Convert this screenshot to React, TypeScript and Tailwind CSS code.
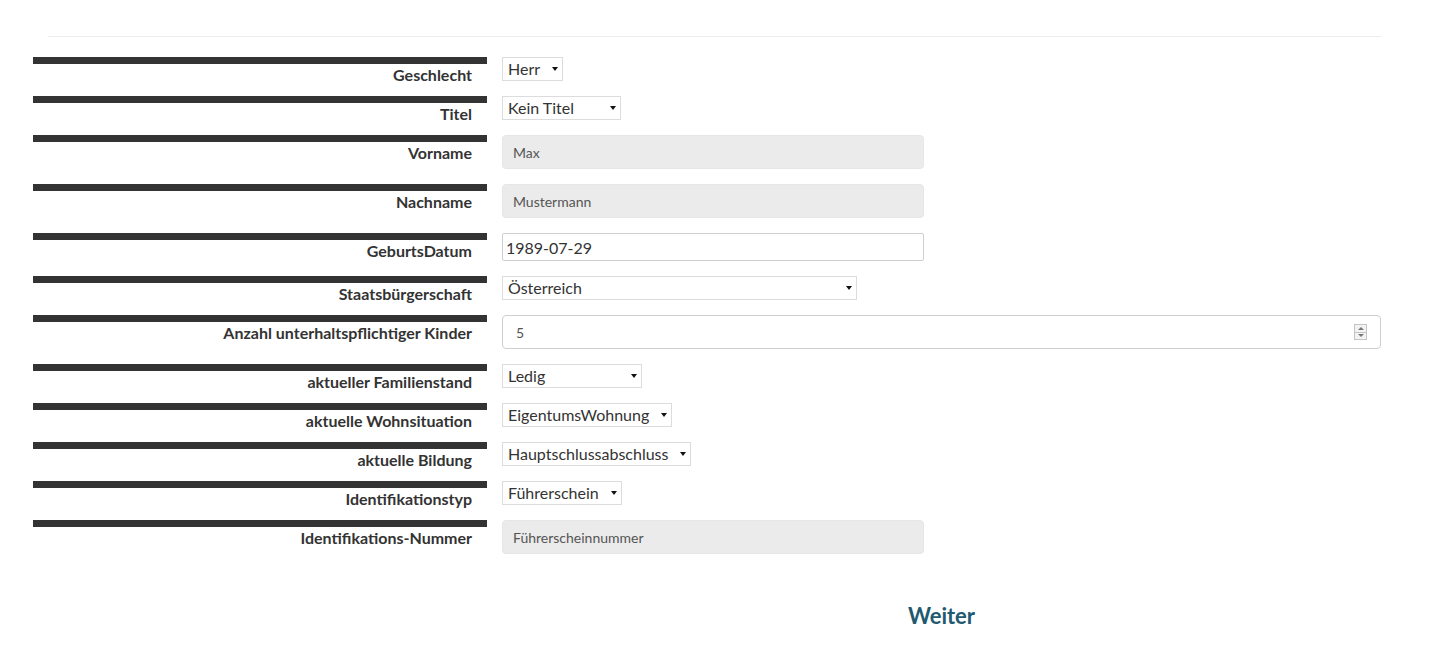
import React from 'react';

type Field =
  | { label: string; kind: 'select'; value: string; width: string }
  | { label: string; kind: 'readonly'; value: string }
  | { label: string; kind: 'date'; value: string }
  | { label: string; kind: 'number'; value: string };

const fields: Field[] = [
  { label: 'Geschlecht', kind: 'select', value: 'Herr', width: 'w-[61px]' },
  { label: 'Titel', kind: 'select', value: 'Kein Titel', width: 'w-[119px]' },
  { label: 'Vorname', kind: 'readonly', value: 'Max' },
  { label: 'Nachname', kind: 'readonly', value: 'Mustermann' },
  { label: 'GeburtsDatum', kind: 'date', value: '1989-07-29' },
  { label: 'Staatsbürgerschaft', kind: 'select', value: 'Österreich', width: 'w-[355px]' },
  { label: 'Anzahl unterhaltspflichtiger Kinder', kind: 'number', value: '5' },
  { label: 'aktueller Familienstand', kind: 'select', value: 'Ledig', width: 'w-[140px]' },
  { label: 'aktuelle Wohnsituation', kind: 'select', value: 'EigentumsWohnung', width: 'w-[170px]' },
  { label: 'aktuelle Bildung', kind: 'select', value: 'Hauptschlussabschluss', width: 'w-[189px]' },
  { label: 'Identifikationstyp', kind: 'select', value: 'Führerschein', width: 'w-[120px]' },
  { label: 'Identifikations-Nummer', kind: 'readonly', value: 'Führerscheinnummer' },
];

const Control = ({ field }: { field: Field }) => {
  if (field.kind === 'select') {
    return (
      <div className={`relative ${field.width} h-[24px]`}>
        <select
          defaultValue={field.value}
          className="w-full h-full appearance-none bg-white border border-[#dcdcdc] pl-[5px] text-[16px] leading-[22px] text-[#333] outline-none"
        >
          <option>{field.value}</option>
        </select>
        {/* arrow */}
        <span className="pointer-events-none absolute right-[5px] top-[10px] w-0 h-0 border-l-[3.5px] border-r-[3.5px] border-t-[4px] border-l-transparent border-r-transparent border-t-[#111]" />
      </div>
    );
  }
  if (field.kind === 'readonly') {
    return (
      <input
        readOnly
        value={field.value}
        className="w-[422px] h-[34px] bg-[#ebebeb] border border-[#e6e6e6] rounded-[4px] pl-[10px] text-[14px] text-[#555] outline-none"
      />
    );
  }
  if (field.kind === 'date') {
    return (
      <input
        readOnly
        value={field.value}
        className="w-[422px] h-[28px] bg-white border border-[#cfcfcf] rounded-[2px] pl-[3px] text-[16px] text-[#333] outline-none"
      />
    );
  }
  return (
    <div className="relative w-[879px] h-[34px]">
      <input
        readOnly
        value={field.value}
        className="w-full h-full bg-white border border-[#cfcfcf] rounded-[4px] pl-[13px] text-[14px] text-[#555] outline-none"
      />
      {/* spinner */}
      <div className="absolute right-[14px] top-[9px] w-[13px] h-[16px] border border-[#c4c4c4] bg-[#f3f3f3] flex flex-col">
        <div className="flex-1 flex items-center justify-center border-b border-[#c4c4c4]">
          <span className="w-0 h-0 border-l-[3px] border-r-[3px] border-b-[3px] border-l-transparent border-r-transparent border-b-[#777]" />
        </div>
        <div className="flex-1 flex items-center justify-center">
          <span className="w-0 h-0 border-l-[3px] border-r-[3px] border-t-[3px] border-l-transparent border-r-transparent border-t-[#777]" />
        </div>
      </div>
    </div>
  );
};

const App = () => {
  return (
    <div className="min-h-screen bg-white font-['Lato','Open_Sans',sans-serif] text-[#333]">
      <div className="pt-[36px]">
        <hr className="ml-[48px] mr-[51px] border-0 border-t border-[#eeeeee]" />
      </div>

      <form className="pt-[20px] pl-[33px]">
        {fields.map((field) => (
          <div key={field.label} className="flex items-start mb-[15px]">
            <div className="w-[454px] h-[24px] border-t-[7px] border-[#333] overflow-visible">
              <div className="pr-[15px] pt-[1px] text-right text-[16px] leading-[20px] font-bold text-[#333] whitespace-nowrap">
                {field.label}
              </div>
            </div>
            <div className="ml-[15px]">
              <Control field={field} />
            </div>
          </div>
        ))}

        <div className="flex ml-[469px] w-[879px] justify-center pt-[33px]">
          <button type="button" className="text-[22px] font-bold text-[#1f5a70] leading-[28px]">
            Weiter
          </button>
        </div>
      </form>
    </div>
  );
};

export default App;
